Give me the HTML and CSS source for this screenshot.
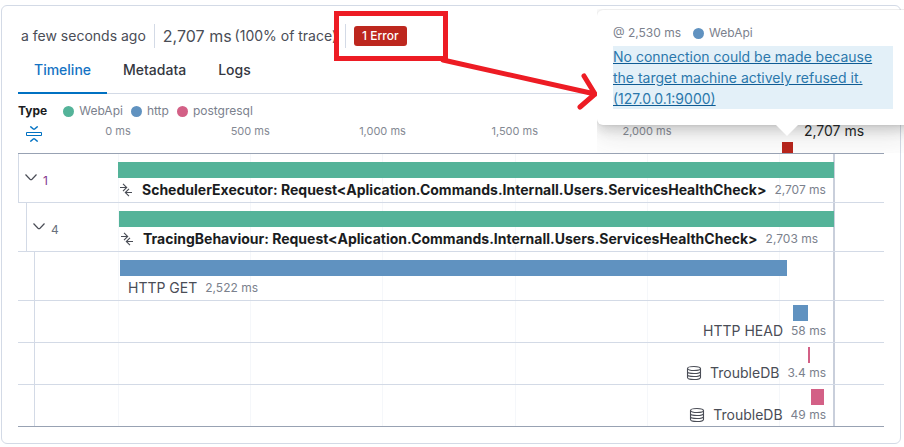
FILE: index.html
```html
<!DOCTYPE html>
<html lang="en">
<head>
<meta charset="utf-8">
<title>Trace sample</title>
<link rel="stylesheet" href="styles.css">
</head>
<body>
<svg class="symbols" aria-hidden="true">
  <symbol id="chevron" viewBox="0 0 14 14"><path d="M1.500 3.500 6 8.200q1 .9 2 0l4.500-4.700" fill="none" stroke="currentColor" stroke-width="1.200"/></symbol>
  <symbol id="merge" viewBox="0 0 14 14"><path d="M1 4.500h6.500M4 .8l3.700 3.700-3.700 3.700M13 9.500H6.500M10 5.800l-3.700 3.700 3.700 3.700" fill="none" stroke="currentColor" stroke-width="1.100"/></symbol>
  <symbol id="database" viewBox="0 0 16 16"><g fill="none" stroke="currentColor" stroke-width="1.100"><ellipse cx="8" cy="3.500" rx="6.500" ry="2"/><path d="M1.500 3.500v9c0 1.100 2.900 2 6.500 2s6.500-.9 6.500-2v-9M1.500 6.500c0 1.100 2.900 2 6.500 2s6.500-.9 6.500-2M1.500 9.500c0 1.100 2.900 2 6.500 2s6.500-.9 6.500-2"/></g></symbol>
</svg>
<main class="panel">
  <header class="summary">
    <span class="summary-item">a few seconds ago</span>
    <span class="summary-item"><span class="total">2,707 ms</span> (100% of trace)</span>
    <span class="summary-item"><a class="badge" href="#errors">1 Error</a></span>
  </header>
  <nav class="tabs" role="tablist">
    <button class="tab active" role="tab" aria-selected="true">Timeline</button>
    <button class="tab" role="tab" aria-selected="false">Metadata</button>
    <button class="tab" role="tab" aria-selected="false">Logs</button>
  </nav>
  <div class="legend">
    <strong>Type</strong>
    <span class="key"><i class="dot green"></i>WebApi</span>
    <span class="key"><i class="dot blue"></i>http</span>
    <span class="key"><i class="dot pink"></i>postgresql</span>
  </div>
  <section class="waterfall">
    <div class="grid-lines">
      <i style="left:0%"></i><i style="left:18.47%"></i><i style="left:36.94%"></i><i style="left:55.41%"></i><i style="left:73.88%"></i><i style="left:92.35%"></i><i class="end"></i>
    </div>
    <div class="axis">
      <button class="collapse" aria-label="Collapse all">
        <svg width="16" height="16" viewBox="0 0 16 16"><g fill="none" stroke="currentColor"><path d="M.5 6.500h15v3H.5z"/><path d="M4.300.4 7.300 3q.7.500 1.400 0l3-2.600M4.300 15.600l3-2.600q.7-.5 1.400 0l3 2.600" stroke-width="1.400"/></g></svg>
      </button>
      <div class="ticks">
        <span style="left:0%">0 ms</span><span style="left:18.47%">500 ms</span><span style="left:36.94%">1,000 ms</span><span style="left:55.41%">1,500 ms</span><span style="left:73.88%">2,000 ms</span><span class="last">2,707 ms</span>
        <i class="marker" style="left:92.74%"></i>
      </div>
    </div>
    <div class="row tall">
      <div class="gutter"><button class="toggle first"><svg width="14" height="14"><use href="#chevron"/></svg><span>1</span></button></div>
      <div class="plot">
        <div class="bar green" style="margin-left:0%;width:100%"></div>
        <div class="label" style="margin-left:0%"><svg width="14" height="14"><use href="#merge"/></svg><b>SchedulerExecutor: Request&lt;Aplication.Commands.Internall.Users.ServicesHealthCheck&gt;</b><small>2,707 ms</small></div>
      </div>
    </div>
    <div class="row tall">
      <div class="gutter level-1"><button class="toggle"><svg width="14" height="14"><use href="#chevron"/></svg><span>4</span></button></div>
      <div class="plot">
        <div class="bar green" style="margin-left:0.14%;width:99.86%"></div>
        <div class="label" style="margin-left:0.14%"><svg width="14" height="14"><use href="#merge"/></svg><b>TracingBehaviour: Request&lt;Aplication.Commands.Internall.Users.ServicesHealthCheck&gt;</b><small>2,703 ms</small></div>
      </div>
    </div>
    <div class="row tall">
      <div class="gutter level-2"></div>
      <div class="plot">
        <div class="bar blue" style="margin-left:0.28%;width:93.16%"></div>
        <div class="label plain" style="margin-left:0.28%"><span>HTTP GET</span><small>2,522 ms</small></div>
      </div>
    </div>
    <div class="row">
      <div class="gutter level-2"></div>
      <div class="plot">
        <div class="bar blue" style="margin-left:94.27%;width:2.14%"></div>
        <div class="label right"><span>HTTP HEAD</span><small>58 ms</small></div>
      </div>
    </div>
    <div class="row">
      <div class="gutter level-2"></div>
      <div class="plot">
        <div class="bar pink" style="margin-left:96.41%;width:0.28%"></div>
        <div class="label right"><svg width="16" height="16"><use href="#database"/></svg><span>TroubleDB</span><small>3.4 ms</small></div>
      </div>
    </div>
    <div class="row">
      <div class="gutter level-2"></div>
      <div class="plot">
        <div class="bar pink" style="margin-left:96.79%;width:1.81%"></div>
        <div class="label right"><svg width="16" height="16"><use href="#database"/></svg><span>TroubleDB</span><small>49 ms</small></div>
      </div>
    </div>
  </section>
</main>
<aside class="popover-layer">
  <div class="popover">
    <div class="popover-head"><span>@ 2,530 ms</span><span class="key"><i class="dot blue"></i>WebApi</span></div>
    <a class="message" href="#error">No connection could be made because the target machine actively refused it. (127.0.0.1:9000)</a>
  </div>
</aside>
<svg class="annotation" width="597" height="120" viewBox="0 0 597 120" aria-hidden="true">
  <g fill="none" stroke="#ed1c24" stroke-width="5">
    <path d="M336.500 13.500h109v45h-109z"/>
    <path d="M443 60 595 94M584 76l11 18-15 13" stroke-linecap="round" stroke-linejoin="round"/>
  </g>
</svg>
</body>
</html>
```
FILE: styles.css
```css
* { box-sizing: border-box; }
body {
  margin: 0;
  position: relative;
  overflow: hidden;
  background: #fff;
  color: #4a4d56;
  font: 14px/20px Inter, "Liberation Sans", sans-serif;
}
button {
  padding: 0;
  border: 0;
  background: none;
  color: inherit;
  font: inherit;
  cursor: pointer;
}
svg { flex: none; }
.symbols { position: absolute; width: 0; height: 0; }

.panel {
  margin: 5px 3px 3px 1px;
  padding: 18px 16px 16px;
  border: 1px solid #d3dae6;
  border-radius: 6px;
}

.summary { display: flex; height: 24px; padding-left: 3px; }
.summary-item {
  display: flex;
  align-items: center;
  gap: 3px;
  white-space: nowrap;
}
.summary-item + .summary-item {
  margin-left: 8px;
  padding-left: 8px;
  border-left: 1px solid #d3dae6;
}
.total { font-size: 16px; }
.badge {
  padding: 0 8px;
  border-radius: 3px;
  background: #bd271e;
  color: #fff;
  font-size: 12px;
  font-weight: 500;
  text-decoration: none;
}

.tabs {
  display: flex;
  height: 40px;
  margin-top: 6px;
  border-bottom: 1px solid #d3dae6;
}
.tab {
  height: 40px;
  padding: 0 16px 8px;
  color: #343741;
  font-weight: 500;
}
.tab.active { color: #1573c4; border-bottom: 2px solid #0071c2; padding-bottom: 6px; }

.legend {
  display: flex;
  gap: 8px;
  padding-top: 8px;
  color: #7b818d;
  font-size: 12px;
  line-height: 18px;
}
.legend strong { margin-right: 8px; color: #1a1c21; }
.key { display: flex; align-items: center; gap: 5px; }
.dot { width: 11px; height: 11px; border-radius: 50%; }
.green { background: #54b399; }
.blue { background: #6092c0; }
.pink { background: #d36086; }

.waterfall { position: relative; }
.axis {
  display: flex;
  height: 34px;
  padding-right: 50px;
  border-bottom: 1px solid #98a2b3;
}
.collapse {
  width: 100px;
  padding: 6px 8px 11px;
  color: #0071c2;
  text-align: left;
}
.collapse svg { display: block; }
.ticks { position: relative; flex: 1; }
.ticks span {
  position: absolute;
  top: 2px;
  transform: translateX(-50%);
  color: #848993;
  font-size: 11px;
  line-height: 18px;
  white-space: nowrap;
}
.ticks .last { left: 100%; color: #1a1c21; font-size: 14px; }
.marker {
  position: absolute;
  bottom: 0;
  width: 11px;
  height: 11px;
  background: #b9251c;
}
.grid-lines { position: absolute; inset: 34px 50px 0 100px; }
.grid-lines i {
  position: absolute;
  top: 0;
  bottom: 0;
  width: 1px;
  background: #f5f7fa;
}
.grid-lines .end { left: 100%; width: 2px; margin-left: -1px; background: #c9cfdb; }

.row {
  position: relative;
  display: flex;
  padding-right: 50px;
  border-bottom: 1px solid #d3dae6;
}
.row:last-child { border-color: #98a2b3; }
.gutter {
  flex: none;
  display: flex;
  align-items: center;
  width: 100px;
  border-left: 1px solid #d3dae6;
}
.level-1 { width: 92px; margin-left: 8px; }
.level-2 { width: 84px; margin-left: 16px; }
.toggle { display: flex; align-items: center; gap: 5px; padding-left: 5px; font-size: 12px; }
.toggle span { padding-top: 6px; color: #69707d; }
.toggle.first span { color: #83348c; }
.plot { flex: 1; min-width: 0; padding: 4px 0 2px; }
.tall .plot { padding: 8px 0 0; }
.bar { height: 16px; }
.label {
  display: flex;
  align-items: center;
  gap: 8px;
  height: 19px;
  padding-left: 1px;
  white-space: nowrap;
}
.label b { margin-left: 1px; color: #1a1c21; font-weight: 700; }
.tall .label { height: 24px; }
.label small { color: #7b818d; font-size: 12px; }
.label.plain { padding-left: 8px; }
.label.right { justify-content: flex-end; padding-right: 8px; }

.popover-layer {
  position: absolute;
  top: 9px;
  right: 0;
  width: 307px;
  height: 144px;
  overflow: hidden;
}
.popover {
  position: relative;
  margin: 1px -8px 0 0;
  height: 115px;
  padding: 13px 19px 16px 16px;
  border-radius: 6px;
  background: #fff;
  box-shadow: 0 6px 12px -1px rgba(60, 60, 60, .2), 0 12px 30px rgba(60, 60, 60, .12), 0 0 3px rgba(60, 60, 60, .15);
}
.popover::after {
  content: "";
  position: absolute;
  top: 100%;
  left: 179px;
  border: 11px solid transparent;
  border-top-color: #fff;
  border-bottom: 0;
}
.popover-head {
  display: flex;
  gap: 12px;
  color: #7b818d;
  font-size: 12px;
}
.message {
  display: block;
  margin-top: 3px;
  background: #e3f0f8;
  color: #2b78ac;
  line-height: 21px;
  text-decoration-color: #0f5c94;
}

.annotation { position: absolute; top: 0; left: 0; pointer-events: none; }
```
